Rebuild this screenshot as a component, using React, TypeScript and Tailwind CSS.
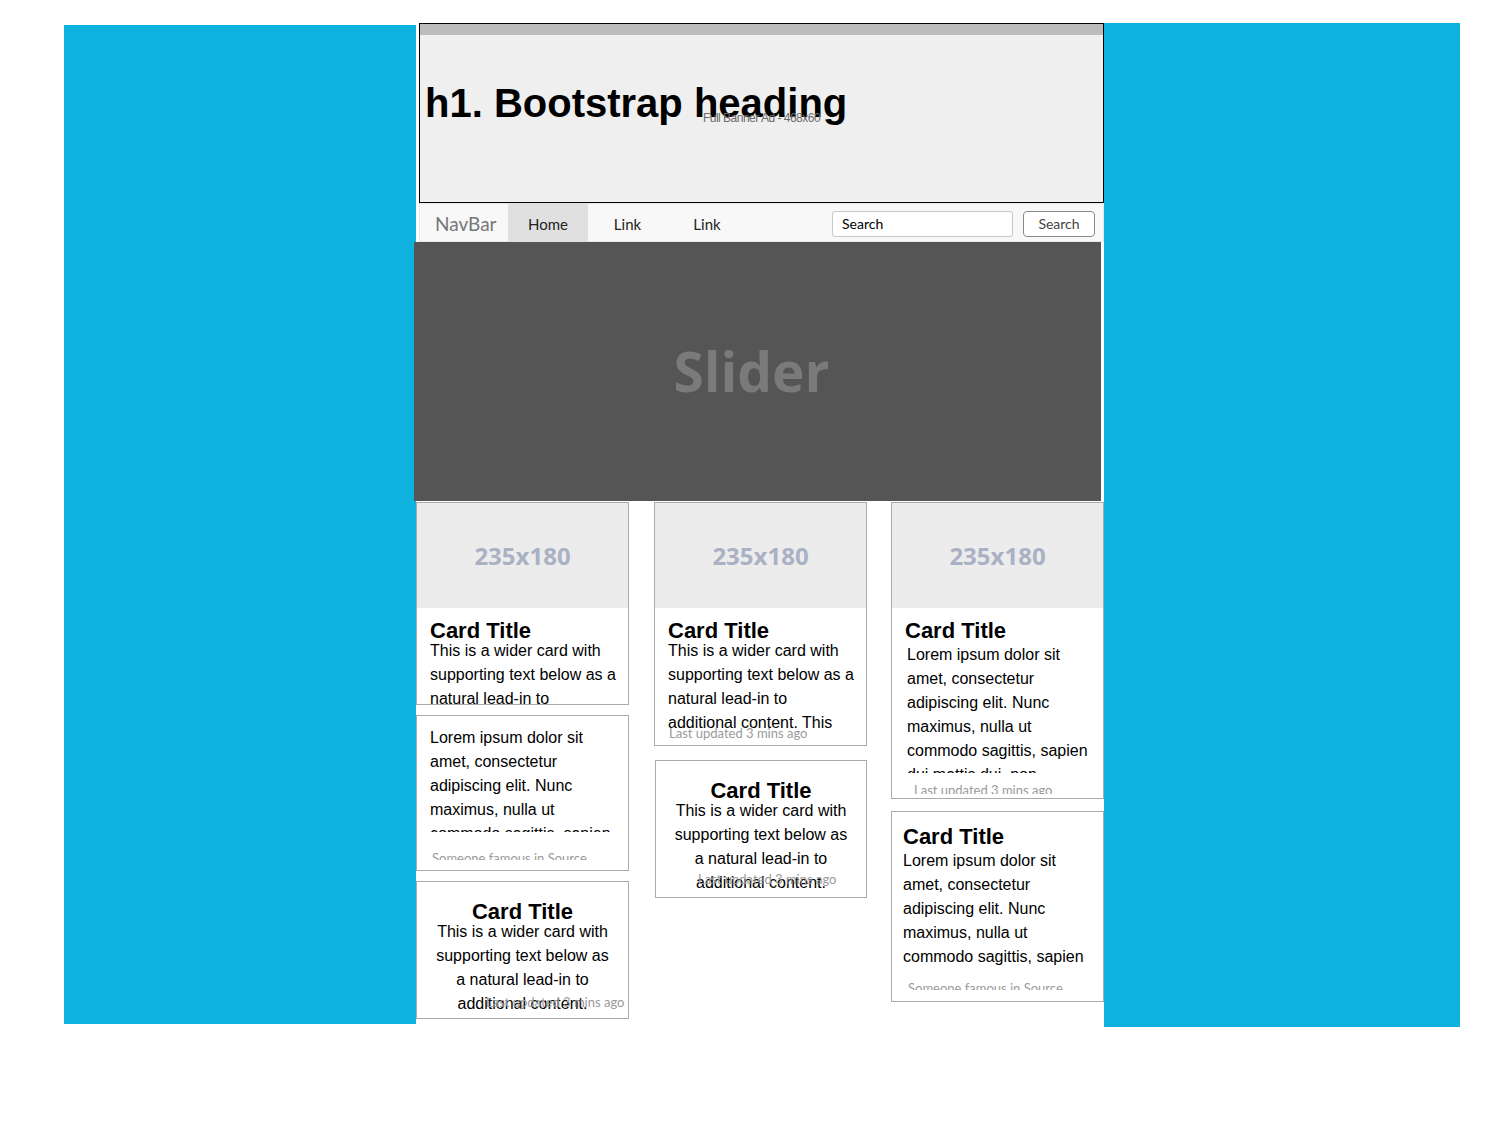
import React from "react"

const arial = "font-['Liberation_Sans',Arial,sans-serif]"
const lato = "font-['Lato','Liberation_Sans',sans-serif]"
const openSans = "font-['Open_Sans','Liberation_Sans',sans-serif]"

const lorem =
  "Lorem ipsum dolor sit amet, consectetur adipiscing elit. Nunc maximus, nulla ut commodo sagittis, sapien dui mattis dui, non pulvinar lorem felis nec erat."
const wider =
  "This is a wider card with supporting text below as a natural lead-in to additional content."
const longer =
  "This is a wider card with supporting text below as a natural lead-in to additional content. This card has even longer content than the first to show that equal height action."

function Thumb() {
  return (
    <div className="h-[105px] bg-[#ececec] flex items-center justify-center">
      <span className={`${openSans} text-[24px] font-bold text-[#aab1c4]`}>235x180</span>
    </div>
  )
}

function Title({ center = false }: { center?: boolean }) {
  return (
    <h3 className={`text-[22px] font-bold leading-[16px] text-black ${center ? "text-center" : ""}`}>
      Card Title
    </h3>
  )
}

function Footnote({ text, wrap = false }: { text: string; wrap?: boolean }) {
  return (
    <div
      className={`${lato} text-[13px] leading-[16px] text-[#9a9a9a] ${wrap ? "w-[165px]" : "whitespace-nowrap"}`}
    >
      {text}
    </div>
  )
}

export default function App() {
  return (
    <div className={`min-h-[1137px] bg-white flex items-start pl-[64px] pt-[23px] ${arial}`}>
      <div className="mt-[2px] w-[352px] h-[999px] bg-[#0fb1df] shrink-0" />

      <div className="w-[688px] flex flex-col shrink-0">
        {/* banner */}
        <div className="relative ml-[3px] w-[685px] h-[180px] border border-black bg-[#efefef] flex flex-col">
          <div className="h-[11px] bg-[#bcbcbc]" />
          <h1 className="mt-[45px] pl-[5px] text-[40px] font-bold leading-[46px] text-black">
            h1. Bootstrap heading
          </h1>
          <span className="absolute left-1/2 top-[87px] -translate-x-1/2 whitespace-nowrap font-['Liberation_Sans',sans-serif] text-[12px] leading-[14px] tracking-[-0.5px] text-[#6b6b6b]">
            Full Banner Ad - 468x60
          </span>
        </div>

        {/* navbar */}
        <div className={`ml-[3px] w-[685px] h-[39px] bg-[#f8f8f8] border border-[#e7e7e7] rounded-tr-[4px] flex items-stretch ${lato}`}>
          <div className="w-[88px] pl-[15px] pt-[3px] flex items-center text-[19px] text-[#777]">NavBar</div>
          <div className="w-[80px] -my-[1px] pt-[3px] bg-[#e0e0e0] flex items-center justify-center text-[15px] text-[#222]">Home</div>
          <div className="w-[79px] pt-[3px] flex items-center justify-center text-[15px] text-[#222]">Link</div>
          <div className="w-[80px] pt-[3px] flex items-center justify-center text-[15px] text-[#222]">Link</div>
          <div className="ml-auto mr-[8px] mt-[2px] flex items-center gap-[10px]">
            <div className="w-[181px] h-[26px] border border-[#c8c8c8] rounded-[3px] bg-white flex items-center pl-[9px] text-[14px] text-black">
              Search
            </div>
            <div className="w-[72px] h-[26px] border border-[#8a8a8a] rounded-[4px] bg-white flex items-center justify-center text-[14px] text-[#444]">
              Search
            </div>
          </div>
        </div>

        {/* slider */}
        <div className="-ml-[2px] w-[687px] h-[259px] pr-[12px] bg-[#555555] flex items-center justify-center">
          <span className={`${openSans} text-[55px] font-bold text-[#7a7a7a]`}>Slider</span>
        </div>

        {/* cards */}
        <div className="mt-[1px] flex items-start">
          {/* column 1 */}
          <div className="w-[213px] flex flex-col">
            <div className="h-[203px] border border-[#aaa] bg-white overflow-hidden">
              <Thumb />
              <div className="pt-[15px] pl-[13px] pr-[8px]">
                <Title />
                <p className="text-[16px] leading-[24px] text-black">{wider}</p>
              </div>
            </div>

            <div className="mt-[10px] h-[156px] border border-[#aaa] bg-white overflow-hidden pt-[10px] pl-[13px] pr-[8px]">
              <p className="h-[106px] overflow-hidden text-[16px] leading-[24px] text-black">{lorem}</p>
              <div className="mt-[18px] h-[10px] overflow-hidden pl-[2px]">
                <Footnote text="Someone famous in Source Title" wrap />
              </div>
            </div>

            <div className="relative mt-[10px] h-[138px] border border-[#aaa] bg-white overflow-hidden pt-[22px] px-[18px]">
              <Title center />
              <p className="text-center text-[16px] leading-[24px] text-black">{wider}</p>
              <div className="absolute left-[69px] top-[112px]">
                <Footnote text="Last updated 3 mins ago" />
              </div>
            </div>
          </div>

          {/* column 2 */}
          <div className="ml-[25px] w-[213px] flex flex-col">
            <div className="relative h-[244px] border border-[#aaa] bg-white overflow-hidden">
              <Thumb />
              <div className="pt-[15px] pl-[13px] pr-[8px]">
                <Title />
                <p className="h-[99px] overflow-hidden text-[16px] leading-[24px] text-black">{longer}</p>
              </div>
              <div className="absolute left-[14px] top-[222px]">
                <Footnote text="Last updated 3 mins ago" />
              </div>
            </div>

            <div className="relative ml-[1px] mt-[14px] h-[138px] border border-[#aaa] bg-white overflow-hidden pt-[22px] px-[18px]">
              <Title center />
              <p className="text-center text-[16px] leading-[24px] text-black">{wider}</p>
              <div className="absolute left-[42px] top-[110px]">
                <Footnote text="Last updated 3 mins ago" />
              </div>
            </div>
          </div>

          {/* column 3 */}
          <div className="ml-[24px] w-[213px] flex flex-col">
            <div className="h-[297px] border border-[#aaa] bg-white overflow-hidden">
              <Thumb />
              <div className="pt-[15px] pl-[13px] pr-[6px]">
                <Title />
                <p className="mt-[4px] pl-[2px] h-[130px] overflow-hidden text-[16px] leading-[24px] text-black">{lorem}</p>
                <div className="mt-[9px] pl-[9px] h-[12px] overflow-hidden">
                  <Footnote text="Last updated 3 mins ago" />
                </div>
              </div>
            </div>

            <div className="mt-[12px] h-[191px] border border-[#aaa] bg-white overflow-hidden pt-[17px] pl-[11px] pr-[8px]">
              <Title />
              <p className="mt-[4px] h-[120px] overflow-hidden text-[16px] leading-[24px] text-black">{lorem}</p>
              <div className="mt-[11px] pl-[5px] h-[10px] overflow-hidden">
                <Footnote text="Someone famous in Source Title" wrap />
              </div>
            </div>
          </div>
        </div>
      </div>

      <div className="w-[356px] h-[1004px] bg-[#0fb1df] shrink-0" />
    </div>
  )
}
